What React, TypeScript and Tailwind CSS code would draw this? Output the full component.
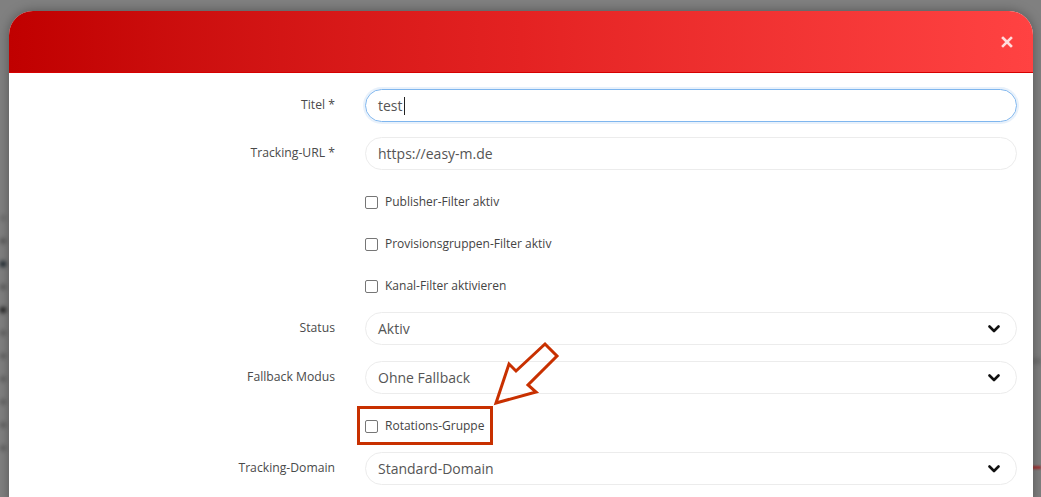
import React from "react";

const font = { fontFamily: '"Open Sans", "Liberation Sans", sans-serif' };

function Chevron() {
  return (
    <svg width="12" height="8" viewBox="0 0 12 8" className="shrink-0">
      <path d="M1.5 1.5 6 6l4.5-4.5" fill="none" stroke="#111" strokeWidth="2.6" strokeLinecap="round" strokeLinejoin="round" />
    </svg>
  );
}

function Field({ label, children, className = "" }: { label: string; children: React.ReactNode; className?: string }) {
  return (
    <div className={`flex items-start ${className}`}>
      <div className="w-[326px] shrink-0 pt-[6px] text-right text-[12.2px] leading-[20px] text-[#4a4a4a]">{label}</div>
      <div className="ml-[30px] flex-1">{children}</div>
    </div>
  );
}

function TextBox({ value, focused = false }: { value: string; focused?: boolean }) {
  return (
    <div
      className={`flex h-[33px] items-center rounded-full border px-[12px] text-[14px] text-[#555] ${
        focused ? "border-[#7fb6ee] shadow-[0_0_0_2px_rgba(100,160,230,0.15)]" : "border-[#ececec]"
      }`}
    >
      <span>{value}</span>
      {focused && <span className="ml-[1px] inline-block h-[18px] w-px bg-[#222]" />}
    </div>
  );
}

function SelectBox({ value }: { value: string }) {
  return (
    <div className="flex h-[33px] items-center justify-between rounded-full border border-[#ececec] pl-[12px] pr-[16px] text-[14px] text-[#555]">
      <span>{value}</span>
      <Chevron />
    </div>
  );
}

function Check({ label, className = "" }: { label: string; className?: string }) {
  return (
    <div className={`flex h-[42px] items-center ${className}`}>
      <div className="ml-[356px] flex items-center">
        <span className="h-[13px] w-[13px] rounded-[2px] border border-[#767676] bg-white" />
        <span className="ml-[7px] text-[12px] leading-[16px] text-[#444]">{label}</span>
      </div>
    </div>
  );
}

export default function App() {
  return (
    <div className="relative h-[497px] w-[1041px] overflow-hidden bg-[#808080]" style={font}>
      {/* blurred page behind the overlay */}
      <div className="absolute left-0 top-[215px] flex flex-col gap-[17px] blur-[2px]">
        {["#6a6a6a", "#555", "#0d1a22", "#5a5a5a", "#111", "#5e5e5e", "#5e5e5e", "#5e5e5e", "#5e5e5e", "#5e5e5e", "#5e5e5e"].map((c, i) => (
          <div key={i} className="h-[6px] w-[6px] rounded-full" style={{ background: c }} />
        ))}
      </div>
      <div className="absolute right-0 top-[358px] h-[6px] w-[10px] bg-[#6e6e6e] blur-[2px]" />
      <div className="absolute right-0 top-[466px] h-[3px] w-[10px] bg-[#a23030] blur-[1px]" />

      <div className="relative ml-[9px] mt-[11px] w-[1024px] rounded-t-[24px] bg-white shadow-[0_0_12px_rgba(0,0,0,0.35)]">
        <div className="flex h-[62px] items-center justify-end rounded-t-[24px] border-b border-[#d60000] bg-gradient-to-r from-[#c00000] via-[#e42222] to-[#ff4242] pr-[20px]">
          <svg width="12" height="12" viewBox="0 0 12 12">
            <path d="M2 2l8 8M10 2l-8 8" stroke="rgba(255,255,255,0.82)" strokeWidth="2.6" strokeLinecap="square" />
          </svg>
        </div>

        <div className="pb-[20px] pr-[16px] pt-[16px]">
          <Field label="Titel *">
            <TextBox value="test" focused />
          </Field>
          <Field label="Tracking-URL *" className="mt-[15px]">
            <TextBox value="https://easy-m.de" />
          </Field>
          <Check label="Publisher-Filter aktiv" className="mt-[11px]" />
          <Check label="Provisionsgruppen-Filter aktiv" />
          <Check label="Kanal-Filter aktivieren" />
          <Field label="Status" className="mt-[5px]">
            <SelectBox value="Aktiv" />
          </Field>
          <Field label="Fallback Modus" className="mt-[16px]">
            <SelectBox value="Ohne Fallback" />
          </Field>
          <div className="relative mt-[11px]">
            <Check label="Rotations-Gruppe" />
            {/* annotation box */}
            <div className="pointer-events-none absolute left-[348px] top-[1px] h-[39px] w-[136px] border-[3px] border-[#c83000]" />
          </div>
          <Field label="Tracking-Domain" className="mt-[5px]">
            <SelectBox value="Standard-Domain" />
          </Field>
        </div>
      </div>

      {/* annotation arrow */}
      <svg className="pointer-events-none absolute left-0 top-0" width="1041" height="497">
        <polygon
          points="496,403 509,364 516,371 545,344 557,356 528,385 536,392"
          fill="none"
          stroke="#c83000"
          strokeWidth="3"
          strokeLinejoin="miter"
        />
      </svg>
    </div>
  );
}
